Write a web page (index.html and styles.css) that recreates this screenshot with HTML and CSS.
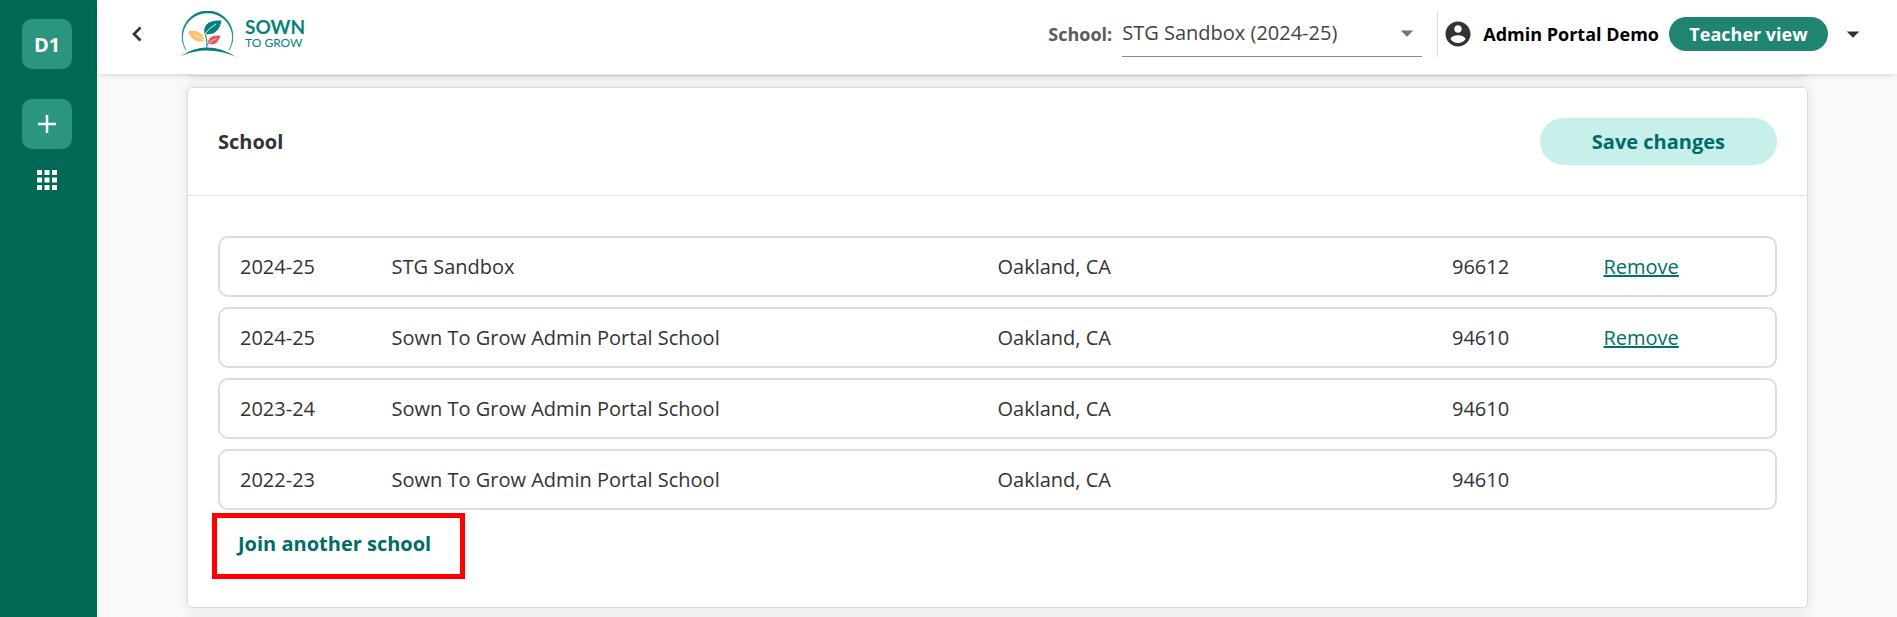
FILE: index.html
```
<!DOCTYPE html>
<html lang="en">
<head>
<meta charset="utf-8">
<meta name="viewport" content="width=device-width, initial-scale=1">
<title>Sown To Grow</title>
<link rel="stylesheet" href="styles.css">
</head>
<body>
<nav class="sidebar" aria-label="Main">
  <button class="tile tile-district" type="button">D1</button>
  <button class="tile" type="button" aria-label="Add">
    <svg width="30" height="30" viewBox="0 0 30 30"><path d="M15 6v18M6 15h18" stroke="#fff" stroke-width="2.500" fill="none"/></svg>
  </button>
  <button class="apps" type="button" aria-label="Apps">
    <svg width="30" height="30" viewBox="0 0 24 24" fill="#fff"><path d="M4 8h4V4H4v4zm6 12h4v-4h-4v4zm-6 0h4v-4H4v4zm0-6h4v-4H4v4zm6 0h4v-4h-4v4zm6-10v4h4V4h-4zm-6 4h4V4h-4v4zm6 6h4v-4h-4v4zm0 6h4v-4h-4v4z"/></svg>
  </button>
</nav>
<div class="page">
  <header class="topbar">
    <button class="back" type="button" aria-label="Back">
      <svg width="24" height="24" viewBox="0 0 24 24"><path d="M15.500 5.500 9 12l6.500 6.500" stroke="#333" stroke-width="2.700" fill="none"/></svg>
    </button>
    <a class="logo" href="#">
      <svg width="56" height="46" viewBox="0 0 56 46" aria-hidden="true">
        <path d="M6 39A25.500 25.500 0 1 1 49 39A24.900 24.600 0 1 0 6 39z" fill="#05827b" stroke="#05827b" stroke-width=".4"/>
        <path d="M0 45.500Q27 27.500 56 46Q27 33.500 0 45.500z" fill="#05827b"/>
        <path d="M26.500 38C27.500 32 27 28 25 23.500M27 34L29 32" stroke="#05827b" stroke-width="1" fill="none"/>
        <path d="M24.500 23C22.500 14 29 8.500 41.500 9.500C39.500 20 34 24.500 24.500 23z" fill="#05827b"/>
        <path d="M24.500 23.500Q29 17 36 13" stroke="#fff" stroke-width=".9" fill="none"/>
        <path d="M8 20.500C15 18.500 23.500 21 24.500 30C17 32 11 28.500 8 20.500z" fill="#fdc26f"/>
        <path d="M15 24.500Q20 25 24 29.500" stroke="#fff" stroke-width=".8" fill="none"/>
        <path d="M28 32.500C28 26.500 33 23.500 40.500 25C38 32 34 35 28 32.500z" fill="#ec5564"/>
        <path d="M28.500 32.500Q32 29 36.500 27.500" stroke="#fff" stroke-width=".8" fill="none"/>
      </svg>
      <span class="wordmark"><span class="word-big">SOWN</span><span class="word-small">TO GROW</span></span>
    </a>
    <div class="school-picker">
      <label for="school">School:</label>
      <div class="select-wrap">
        <select id="school"><option>STG Sandbox (2024-25)</option></select>
        <svg class="select-arrow" width="30" height="30" viewBox="0 0 24 24" fill="#757575"><path d="m7 10 5 5 5-5z"/></svg>
      </div>
    </div>
    <div class="account">
      <svg width="30" height="30" viewBox="0 0 24 24" fill="#333"><path d="M12 2C6.480 2 2 6.480 2 12s4.480 10 10 10 10-4.480 10-10S17.520 2 12 2zm0 3c1.660 0 3 1.340 3 3s-1.340 3-3 3-3-1.340-3-3 1.340-3 3-3zm0 14.200c-2.500 0-4.710-1.280-6-3.220.030-1.990 4-3.080 6-3.080 1.990 0 5.970 1.090 6 3.080-1.290 1.940-3.500 3.220-6 3.220z"/></svg>
      <span class="account-name">Admin Portal Demo</span>
      <button class="pill" type="button">Teacher view</button>
      <button class="menu" type="button" aria-label="Account menu">
        <svg width="30" height="30" viewBox="0 0 24 24" fill="#333"><path d="m7 10 5 5 5-5z"/></svg>
      </button>
    </div>
  </header>
  <main class="content">
    <section class="card card-before"></section>
    <section class="card">
      <div class="card-head">
        <h2>School</h2>
        <button class="save" type="button">Save changes</button>
      </div>
      <div class="card-body">
        <table class="schools">
          <tbody>
            <tr><td>2024-25</td><td>STG Sandbox</td><td>Oakland, CA</td><td>96612</td><td><a href="#">Remove</a></td></tr>
            <tr><td>2024-25</td><td>Sown To Grow Admin Portal School</td><td>Oakland, CA</td><td>94610</td><td><a href="#">Remove</a></td></tr>
            <tr><td>2023-24</td><td>Sown To Grow Admin Portal School</td><td>Oakland, CA</td><td>94610</td><td></td></tr>
            <tr><td>2022-23</td><td>Sown To Grow Admin Portal School</td><td>Oakland, CA</td><td>94610</td><td></td></tr>
          </tbody>
        </table>
        <div class="join-wrap">
          <button class="join" type="button">Join another school</button>
          <span class="highlight"></span>
        </div>
      </div>
    </section>
    <section class="card card-after"></section>
  </main>
</div>
</body>
</html>
```
FILE: styles.css
```
* { box-sizing: border-box; }

body {
  margin: 0;
  height: 100vh;
  display: flex;
  overflow: hidden;
  background: #f9f9f9;
  color: #333;
  font-family: "Open Sans", "Noto Sans", sans-serif;
  font-size: 20px;
  line-height: 27px;
}

button {
  border: 0;
  padding: 0;
  background: none;
  font: inherit;
  color: inherit;
  cursor: pointer;
}

svg { display: block; }

.sidebar {
  flex: 0 0 97px;
  display: flex;
  flex-direction: column;
  align-items: center;
  padding: 19px 3px 0 0;
  background: #026955;
}

.tile {
  display: flex;
  align-items: center;
  justify-content: center;
  width: 50px;
  height: 50px;
  border-radius: 10px;
  background: #2c9580;
  color: #fff;
  font-weight: 700;
}

.tile-district { margin-bottom: 30px; }

.apps { margin-top: 16px; }

.page {
  flex: 1;
  min-width: 0;
  display: flex;
  flex-direction: column;
}

.topbar {
  position: relative;
  z-index: 1;
  display: flex;
  align-items: center;
  padding: 11px 29px 17px 28px;
  background: #fff;
  box-shadow: 0 3px 6px -2px rgba(0, 0, 0, 0.16);
}

.logo {
  display: flex;
  align-items: center;
  gap: 9px;
  margin-left: 31px;
  color: #05827b;
  text-decoration: none;
  font-family: Lato, sans-serif;
}

.wordmark {
  display: flex;
  flex-direction: column;
}

.word-big {
  font-size: 19px;
  line-height: 18px;
  font-weight: 700;
}

.word-small {
  font-size: 12px;
  line-height: 14px;
}

.school-picker {
  display: flex;
  align-items: center;
  gap: 10px;
  margin-left: auto;
}

.school-picker label {
  font-size: 18px;
  font-weight: 700;
  color: #5c5c5c;
}

.select-wrap { position: relative; }

.select-wrap select {
  display: block;
  width: 300px;
  height: 46px;
  padding: 0 32px 2px 0;
  border: 0;
  border-bottom: 1px solid #8c8c8c;
  border-radius: 0;
  appearance: none;
  background: transparent;
  color: #444;
  font: inherit;
}

.select-arrow {
  position: absolute;
  right: 0;
  top: 7px;
  pointer-events: none;
}

.account {
  display: flex;
  align-items: center;
  height: 46px;
  margin-left: 15px;
  padding-left: 5px;
  border-left: 1px solid #ddd;
}

.account-name {
  margin: 0 10px;
  font-size: 18px;
  font-weight: 700;
  color: #000;
}

.pill {
  min-width: 159px;
  height: 34px;
  border-radius: 17px;
  background: #1f8571;
  color: #fff;
  font-size: 18px;
  font-weight: 700;
}

.menu { margin-left: 10px; }

.content {
  flex: 1;
  min-height: 0;
  display: flex;
  flex-direction: column;
  gap: 11px;
  padding: 0 89px 0 90px;
  overflow: hidden;
}

.card {
  flex: none;
  border: 1px solid #dcdcdc;
  border-radius: 5px;
  background: #fff;
  box-shadow: 0 0 12px rgba(0, 0, 0, 0.1);
}

.card-before {
  height: 40px;
  margin-top: -38px;
}

.card-after { height: 40px; }

.card-head {
  display: flex;
  align-items: center;
  justify-content: space-between;
  padding: 30px;
  border-bottom: 1px solid #ddd;
}

.card-head h2 {
  margin: 0;
  font-size: 20px;
  font-weight: 700;
}

.save {
  padding: 10px 52px;
  border-radius: 24px;
  background: #c7f0eb;
  color: #006b68;
  font-weight: 700;
}

.card-body { padding: 40px 30px; }

.schools { display: block; }

.schools tbody {
  display: flex;
  flex-direction: column;
  gap: 10px;
}

.schools tr {
  display: grid;
  grid-template-columns: 1fr 4fr 3fr 1fr 1fr;
  padding: 15px 20px;
  border: 2px solid #ddd;
  border-radius: 10px;
}

.schools td { padding: 0; }

.schools a {
  color: #007069;
  text-decoration-thickness: 2px;
}

.join-wrap {
  position: relative;
  width: fit-content;
  margin-top: 10px;
}

.join {
  padding: 10px 20px;
  color: #006b68;
  font-weight: 700;
}

.highlight {
  position: absolute;
  inset: -7px -14px -12px -6px;
  border: 5px solid #f00;
  pointer-events: none;
}
```
